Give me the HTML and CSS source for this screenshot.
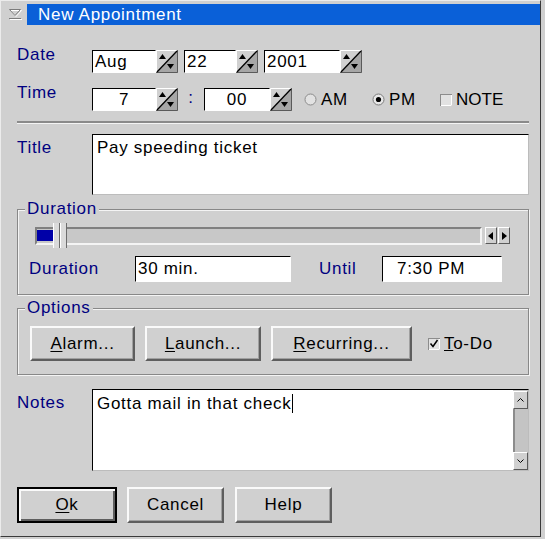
FILE: index.html
```html
<!DOCTYPE html>
<html lang="en">
<head>
    <meta charset="UTF-8">
    <title>New Appointment</title>
    <link rel="stylesheet" href="styles.css">
</head>
<body>
    <div class="window">
        <div class="titlebar">
            <span class="sysmenu">
                <svg width="15" height="13" viewBox="0 0 15 13"><path d="M2.5 2.5H13.5L8 8.5Z" fill="none" stroke="#fff"/><path d="M1.5 1.5H12.5L7 7.5Z" fill="none" stroke="#7c7c7c"/><path d="M1 10.5H13" stroke="#7c7c7c"/><path d="M2 11.5H14" stroke="#fff"/></svg>
            </span>
            <div class="caption">New Appointment</div>
        </div>

        <div class="content">
            <div class="row row-date">
                <span class="label">Date</span>
                <div class="spin w-month">
                    <span class="field">Aug</span>
                    <svg class="spin-btn" width="22" height="23" viewBox="0 0 22 23"><path d="M0 23L22 0V23Z" fill="#a6a6a6"/><path d="M.5 23V.5H22" fill="none" stroke="#fff"/><path d="M21.5 0V22.5H0" fill="none" stroke="#5a5a5a"/><path d="M1 22L21 1" stroke="#000" stroke-width="1.3"/><path d="M3 9L6.5 4L10 9Z"/><path d="M11 14H18L14.5 19Z"/></svg>
                </div>
                <div class="spin w-day">
                    <span class="field">22</span>
                    <svg class="spin-btn" width="22" height="23" viewBox="0 0 22 23"><path d="M0 23L22 0V23Z" fill="#a6a6a6"/><path d="M.5 23V.5H22" fill="none" stroke="#fff"/><path d="M21.5 0V22.5H0" fill="none" stroke="#5a5a5a"/><path d="M1 22L21 1" stroke="#000" stroke-width="1.3"/><path d="M3 9L6.5 4L10 9Z"/><path d="M11 14H18L14.5 19Z"/></svg>
                </div>
                <div class="spin w-year">
                    <span class="field">2001</span>
                    <svg class="spin-btn" width="22" height="23" viewBox="0 0 22 23"><path d="M0 23L22 0V23Z" fill="#a6a6a6"/><path d="M.5 23V.5H22" fill="none" stroke="#fff"/><path d="M21.5 0V22.5H0" fill="none" stroke="#5a5a5a"/><path d="M1 22L21 1" stroke="#000" stroke-width="1.3"/><path d="M3 9L6.5 4L10 9Z"/><path d="M11 14H18L14.5 19Z"/></svg>
                </div>
            </div>

            <div class="row row-time">
                <span class="label">Time</span>
                <div class="spin w-hour">
                    <span class="field center">7</span>
                    <svg class="spin-btn" width="22" height="23" viewBox="0 0 22 23"><path d="M0 23L22 0V23Z" fill="#a6a6a6"/><path d="M.5 23V.5H22" fill="none" stroke="#fff"/><path d="M21.5 0V22.5H0" fill="none" stroke="#5a5a5a"/><path d="M1 22L21 1" stroke="#000" stroke-width="1.3"/><path d="M3 9L6.5 4L10 9Z"/><path d="M11 14H18L14.5 19Z"/></svg>
                </div>
                <span class="colon">:</span>
                <div class="spin w-min">
                    <span class="field center">00</span>
                    <svg class="spin-btn" width="22" height="23" viewBox="0 0 22 23"><path d="M0 23L22 0V23Z" fill="#a6a6a6"/><path d="M.5 23V.5H22" fill="none" stroke="#fff"/><path d="M21.5 0V22.5H0" fill="none" stroke="#5a5a5a"/><path d="M1 22L21 1" stroke="#000" stroke-width="1.3"/><path d="M3 9L6.5 4L10 9Z"/><path d="M11 14H18L14.5 19Z"/></svg>
                </div>
                <span class="choice first">
                    <svg width="13" height="13" viewBox="0 0 13 13"><circle cx="6.5" cy="6.5" r="5.5" fill="#e2e2e2" stroke="#8c8c8c"/></svg>
                    AM
                </span>
                <span class="choice">
                    <svg width="13" height="13" viewBox="0 0 13 13"><circle cx="6.5" cy="6.5" r="5.5" fill="#e8e8e8" stroke="#7c7c7c"/><circle cx="6.5" cy="6.5" r="2.6" fill="#000"/></svg>
                    PM
                </span>
                <span class="choice note">
                    <svg width="12" height="12" viewBox="0 0 12 12"><rect x=".5" y=".5" width="11" height="11" fill="#e2e2e2" stroke="#8c8c8c"/><path d="M11.5 1V11.5H1" fill="none" stroke="#fff"/></svg>
                    NOTE
                </span>
            </div>

            <hr class="sep">

            <div class="row row-title">
                <span class="label">Title</span>
                <div class="textbox title-box">Pay speeding ticket</div>
            </div>

            <fieldset class="group duration">
                <legend>Duration</legend>
                <div class="slider-row">
                    <div class="slider">
                        <span class="fill"></span>
                        <span class="thumb"></span>
                    </div>
                    <span class="nudge"><svg width="6" height="8" viewBox="0 0 6 8"><path d="M5 0V8L0 4Z"/></svg></span>
                    <span class="nudge"><svg width="6" height="8" viewBox="0 0 6 8"><path d="M1 0V8L6 4Z"/></svg></span>
                </div>
                <div class="dur-row">
                    <span class="label dur-label">Duration</span>
                    <span class="field dur-field">30 min.</span>
                    <span class="label until-label">Until</span>
                    <span class="field until-field">7:30 PM</span>
                </div>
            </fieldset>

            <fieldset class="group options">
                <legend>Options</legend>
                <div class="opt-row">
                    <span class="btn alarm"><u>A</u>larm...</span>
                    <span class="btn launch"><u>L</u>aunch...</span>
                    <span class="btn recurring"><u>R</u>ecurring...</span>
                    <span class="todo">
                        <svg width="12" height="12" viewBox="0 0 12 12"><rect x=".5" y=".5" width="11" height="11" fill="#e2e2e2" stroke="#8c8c8c"/><path d="M11.5 1V11.5H1" fill="none" stroke="#fff"/><path d="M2.5 5.5L5 8.5L9.5 2" fill="none" stroke="#000" stroke-width="1.5"/></svg>
                        <span><u>T</u>o-Do</span>
                    </span>
                </div>
            </fieldset>

            <div class="row row-notes">
                <span class="label">Notes</span>
                <div class="textbox notes-box">
                    <div class="notes-text">Gotta mail in that check<span class="caret"></span></div>
                    <div class="scrollbar">
                        <span class="sb-btn"><svg width="7" height="4" viewBox="0 0 7 4"><path d="M.5 3.5L3.5 .5L6.5 3.5" fill="none" stroke="#000"/></svg></span>
                        <span class="sb-track"></span>
                        <span class="sb-btn"><svg width="7" height="4" viewBox="0 0 7 4"><path d="M.5 .5L3.5 3.5L6.5 .5" fill="none" stroke="#000"/></svg></span>
                    </div>
                </div>
            </div>

            <div class="buttons">
                <span class="btn default"><u>O</u>k</span>
                <span class="btn cancel">Cancel</span>
                <span class="btn help">Help</span>
            </div>
        </div>
    </div>
</body>
</html>
```

FILE: styles.css
```css
* {
    box-sizing: border-box;
}

body {
    margin: 0;
    background: #d0d0d0;
    font-family: "Liberation Sans", Arial, sans-serif;
    font-size: 17px;
    letter-spacing: 0.7px;
    color: #000;
}

.window {
    width: 541px;
    height: 537px;
    border: 1px solid;
    border-color: #ececec #3a3a3a #3a3a3a #ececec;
}

/* title bar */
.titlebar {
    display: flex;
    align-items: center;
    height: 21px;
    margin-top: 3px;
}

.sysmenu {
    display: flex;
    width: 15px;
    margin-left: 7px;
    margin-right: 4px;
}

.caption {
    flex: 1;
    height: 21px;
    line-height: 21px;
    padding-left: 11px;
    background: #0a60d8;
    color: #fff;
}

.content {
    padding: 0 11px 0 16px;
}

.row {
    display: flex;
    align-items: flex-start;
}

.label {
    width: 75px;
    flex-shrink: 0;
    line-height: 20px;
    color: #000080;
}

.row-date {
    margin-top: 25px;
}

.row-date .label,
.row-time .label {
    margin-top: -5px;
}

.row-time {
    margin-top: 15px;
}

/* spin fields */
.spin {
    display: flex;
    height: 23px;
}

.spin-btn {
    display: block;
    flex-shrink: 0;
}

.field {
    display: block;
    flex: 1;
    height: 23px;
    line-height: 21px;
    padding: 0 2px;
    background: #fff;
    border: 1px solid;
    border-color: #000 #fff #fff #000;
    white-space: nowrap;
    overflow: hidden;
}

.field.center {
    text-align: center;
}

.w-month { width: 86px; }
.w-day { width: 74px; margin-left: 6px; }
.w-year { width: 98px; margin-left: 6px; }
.w-hour { width: 86px; }
.w-min { width: 88px; }

.colon {
    width: 26px;
    text-align: center;
    line-height: 20px;
    color: #000080;
}

.choice {
    display: flex;
    align-items: center;
    gap: 4px;
    width: 68px;
    height: 23px;
}

.choice.first {
    margin-left: 12px;
}

.choice.note {
    letter-spacing: 0;
}

.sep {
    margin: 10px 0 0;
    height: 0;
    border: 0;
    border-top: 2px solid #8a8a8a;
    border-bottom: 1px solid #f4f4f4;
}

.row-title {
    margin-top: 10px;
}

.row-title .label {
    margin-top: 4px;
}

.textbox {
    flex: 1;
    background: #fff;
    border: 1px solid;
    border-color: #000 #bcbcbc #bcbcbc #000;
    line-height: 20px;
}

.title-box {
    height: 61px;
    padding: 3px 4px;
}

/* group boxes */
.group {
    margin: 5px 0 0;
    padding: 0;
    min-width: 0;
    border: 1px solid #888;
    box-shadow: inset 1px 1px 0 #f4f4f4, 1px 1px 0 #f4f4f4;
}

.group legend {
    margin-left: 7px;
    padding: 0 2px;
    line-height: 18px;
    color: #000080;
    background: #d0d0d0;
}

.duration {
    padding-bottom: 12px;
}

.slider-row {
    display: flex;
    align-items: center;
    height: 25px;
    margin-top: 5px;
    margin-left: 17px;
}

.slider {
    display: flex;
    align-items: center;
    width: 447px;
    height: 18px;
    background: #c8c8c8;
    border: 2px solid;
    border-color: #808080 #f4f4f4 #f4f4f4 #808080;
}

.fill {
    width: 16px;
    height: 11px;
    background: #0000a8;
}

.thumb {
    flex-shrink: 0;
    width: 14px;
    height: 25px;
    border-left: 1px solid #fff;
    border-right: 1px solid #6c6c6c;
    background: linear-gradient(90deg, #dadada 0 5px, #6c6c6c 5px 6px, #fff 6px 7px, #dadada 7px);
}

.nudge {
    display: flex;
    align-items: center;
    justify-content: center;
    width: 12px;
    height: 17px;
    margin-left: 1px;
    background: #d0d0d0;
    border: 1px solid;
    border-color: #fff #5a5a5a #5a5a5a #fff;
}

.nudge:first-of-type {
    margin-left: 3px;
}

.dur-row {
    display: flex;
    align-items: center;
    height: 26px;
    margin-top: 8px;
    padding-left: 11px;
}

.dur-label {
    width: 106px;
}

.dur-row .field {
    flex: none;
    height: 26px;
    line-height: 24px;
}

.dur-field {
    width: 156px;
}

.until-label {
    width: 63px;
    margin-left: 28px;
}

.until-field {
    width: 120px;
    padding-left: 14px !important;
}

.options {
    margin-top: 4px;
    padding-bottom: 13px;
}

.opt-row {
    display: flex;
    align-items: center;
    gap: 10px;
    margin-top: 9px;
    padding-left: 12px;
}

/* push buttons */
.btn {
    display: flex;
    align-items: center;
    justify-content: center;
    height: 35px;
    background: #d0d0d0;
    border: 2px solid;
    border-color: #fafafa #5e5e5e #5e5e5e #fafafa;
    box-shadow: inset -1px -1px 0 #a0a0a0;
}

.btn u {
    text-underline-offset: 2px;
}

.alarm { width: 105px; }
.launch { width: 116px; }
.recurring { width: 141px; }

.todo {
    display: flex;
    align-items: center;
    gap: 4px;
    margin-left: 6px;
}

.row-notes {
    margin-top: 14px;
}

.row-notes .label {
    margin-top: 4px;
}

.notes-box {
    display: flex;
    height: 82px;
}

.notes-text {
    flex: 1;
    padding: 4px 4px;
}

.caret {
    display: inline-block;
    width: 1px;
    height: 19px;
    margin-left: 1px;
    vertical-align: -4px;
    background: #000;
}

.scrollbar {
    display: flex;
    flex-direction: column;
    width: 15px;
    padding-top: 1px;
    background: #c4c4c4;
}

.sb-btn {
    display: flex;
    align-items: center;
    justify-content: center;
    height: 18px;
    background: #d0d0d0;
    border: 1px solid;
    border-color: #fff #5a5a5a #5a5a5a #fff;
}

.sb-track {
    flex: 1;
    border-left: 2px solid #8c8c8c;
}

.buttons {
    display: flex;
    gap: 10px;
    margin-top: 16px;
}

.buttons .btn {
    height: 36px;
}

.default {
    width: 100px;
    border: 2px solid #000;
    box-shadow: inset 2px 2px 0 #fafafa, inset -2px -2px 0 #5e5e5e;
}

.cancel { width: 97px; }
.help { width: 97px; margin-left: 1px; }
```
